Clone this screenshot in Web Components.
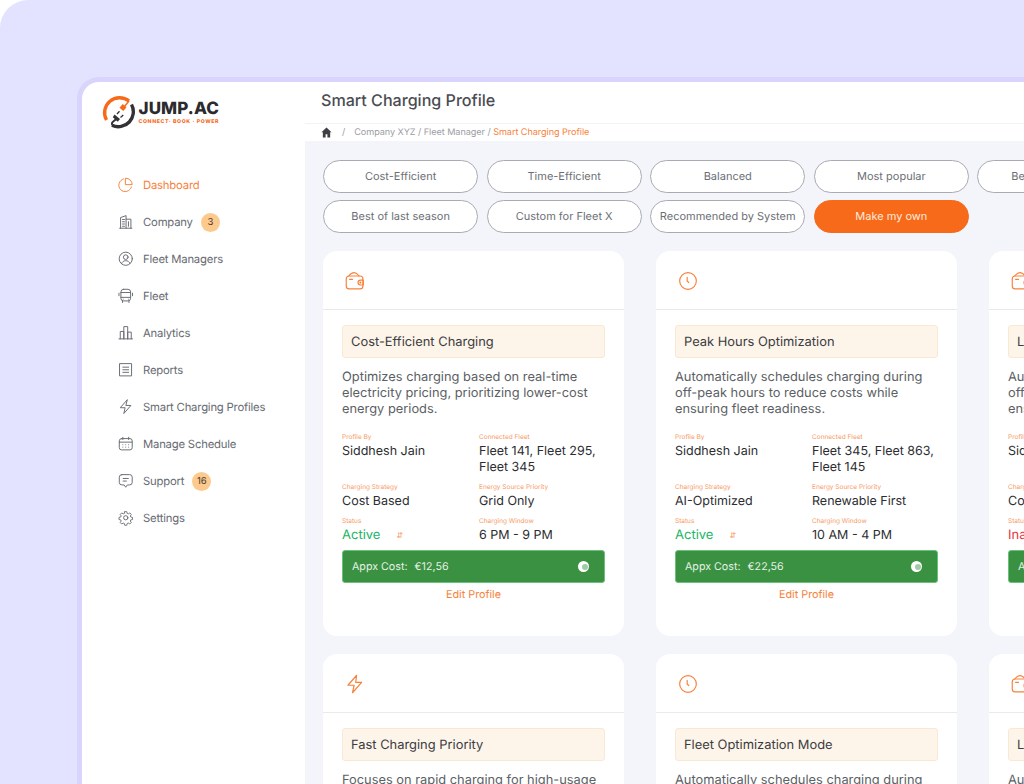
<!DOCTYPE html>
<html lang="en"><head><meta charset="utf-8"><title>Smart Charging Profile</title>
<style>
html,body{margin:0;padding:0;width:1024px;height:784px;overflow:hidden;background:#fff;font-family:"Inter","Noto Sans",sans-serif;text-rendering:geometricPrecision}
</style></head><body>
<app-shell>
  <side-nav slot="side">
    <nav-item icon="pie" active>Dashboard</nav-item>
    <nav-item icon="building" badge="3">Company</nav-item>
    <nav-item icon="user">Fleet Managers</nav-item>
    <nav-item icon="bus">Fleet</nav-item>
    <nav-item icon="bars">Analytics</nav-item>
    <nav-item icon="report">Reports</nav-item>
    <nav-item icon="zap">Smart Charging Profiles</nav-item>
    <nav-item icon="calendar">Manage Schedule</nav-item>
    <nav-item icon="chat" badge="16">Support</nav-item>
    <nav-item icon="gear">Settings</nav-item>
  </side-nav>
  <page-head slot="head"></page-head>
  <chip-row>
    <filter-chip>Cost-Efficient</filter-chip><filter-chip>Time-Efficient</filter-chip><filter-chip>Balanced</filter-chip><filter-chip>Most popular</filter-chip><filter-chip>Best for Summer</filter-chip>
    <filter-chip>Best of last season</filter-chip><filter-chip>Custom for Fleet X</filter-chip><filter-chip>Recommended by System</filter-chip><filter-chip primary>Make my own</filter-chip>
  </chip-row>
  <card-grid>
    <profile-card icon="wallet" heading="Cost-Efficient Charging" cost="€12,56">
      <span slot="desc">Optimizes charging based on real-time electricity pricing, prioritizing lower-cost energy periods.</span>
      <profile-field label="Profile By">Siddhesh Jain</profile-field>
      <profile-field label="Connected Fleet">Fleet 141, Fleet 295, Fleet 345</profile-field>
      <profile-field label="Charging Strategy">Cost Based</profile-field>
      <profile-field label="Energy Source Priority">Grid Only</profile-field>
      <profile-field label="Status" status="active">Active</profile-field>
      <profile-field label="Charging Window">6 PM - 9 PM</profile-field>
    </profile-card>
    <profile-card icon="clock" heading="Peak Hours Optimization" cost="€22,56">
      <span slot="desc">Automatically schedules charging during off-peak hours to reduce costs while ensuring fleet readiness.</span>
      <profile-field label="Profile By">Siddhesh Jain</profile-field>
      <profile-field label="Connected Fleet">Fleet 345, Fleet 863, Fleet 145</profile-field>
      <profile-field label="Charging Strategy">AI-Optimized</profile-field>
      <profile-field label="Energy Source Priority">Renewable First</profile-field>
      <profile-field label="Status" status="active">Active</profile-field>
      <profile-field label="Charging Window">10 AM - 4 PM</profile-field>
    </profile-card>
    <profile-card icon="wallet" heading="Least-Cost Window" cost="€18,20">
      <span slot="desc">Automatically schedules charging during off-peak hours to reduce costs while ensuring fleet readiness.</span>
      <profile-field label="Profile By">Siddhesh Jain</profile-field>
      <profile-field label="Connected Fleet">Fleet 210, Fleet 412, Fleet 518</profile-field>
      <profile-field label="Charging Strategy">Cost Based</profile-field>
      <profile-field label="Energy Source Priority">Grid Only</profile-field>
      <profile-field label="Status" status="inactive">Inactive</profile-field>
      <profile-field label="Charging Window">6 PM - 9 PM</profile-field>
    </profile-card>
    <profile-card icon="zap" heading="Fast Charging Priority" cost="€16,40">
      <span slot="desc">Focuses on rapid charging for high-usage vehicles to keep downtime to a minimum.</span>
    </profile-card>
    <profile-card icon="clock" heading="Fleet Optimization Mode" cost="€20,10">
      <span slot="desc">Automatically schedules charging during off-peak hours to reduce costs.</span>
    </profile-card>
    <profile-card icon="wallet" heading="Least-Cost Window" cost="€14,75">
      <span slot="desc">Automatically balances charging across the fleet.</span>
    </profile-card>
  </card-grid>
</app-shell>
<script>
const ICONS={
 pie:'<path d="M20.800 15.500A10 10 0 1 1 8.500 3"/><path d="M12 1.800a10 10 0 0 1 10 10H12z"/>',
 building:'<path d="M2.500 22h19"/><path d="M4 22V5.500l8.500-3V22"/><path d="M12.500 8h7.500v14"/><path d="M7 8.500h3M7 12h3M7 15.500h3M7 19h3"/><path d="M16.200 12v7"/>',
 user:'<circle cx="12" cy="12" r="10.200"/><circle cx="12" cy="9.500" r="3.600"/><path d="M5.500 19.500c1-3 3.500-4.500 6.500-4.500s5.500 1.500 6.500 4.500"/>',
 bus:'<rect x="4.500" y="2" width="15" height="18" rx="4"/><path d="M4.500 7h15M4.500 14.500h15"/><path d="M1.500 8v4M22.500 8v4"/><path d="M7 20v2.500M17 20v2.500"/><path d="M8 17.300h.01M16 17.300h.01"/>',
 bars:'<path d="M1.500 21.500h21"/><path d="M3.500 21.500V10h5.500v11.500"/><path d="M9 21.500V2.500h6v19"/><path d="M15 21.500V11h5.500v10.500"/>',
 report:'<path d="M3 2.500h18v19H3z"/><path d="M7.500 8h9M7.500 12h9M7.500 16h9"/>',
 zap:'<path d="M14 1.500 3.500 13.500h7.500L9 22.500l11-12.500h-7.200z"/>',
 calendar:'<rect x="2" y="4" width="20" height="17.500" rx="3.500"/><path d="M2 9.500h20M7.500 2v3.500M16.500 2v3.500"/><path d="M7.500 13.500h.01M12 13.500h.01M16.500 13.500h.01M7.500 17.300h.01M12 17.300h.01M16.500 17.300h.01"/>',
 chat:'<path d="M6 2.500h12a4 4 0 0 1 4 4v8a4 4 0 0 1-4 4h-3.500L12 22l-2.500-3.500H6a4 4 0 0 1-4-4v-8a4 4 0 0 1 4-4z"/><path d="M8 8.500h8M8 12.500h5"/>',
 gear:'<circle cx="12" cy="12" r="3.300"/><path d="M10.200 1.800h3.600l.6 2.900 1.900.8 2.500-1.600 2.500 2.500-1.600 2.500.8 1.900 2.900.6v3.600l-2.900.6-.8 1.900 1.600 2.500-2.500 2.500-2.500-1.600-1.900.8-.6 2.900h-3.600l-.6-2.900-1.900-.8-2.500 1.600-2.500-2.500 1.600-2.500-.8-1.900-2.900-.6v-3.600l2.900-.6.8-1.900-1.600-2.500 2.500-2.500 2.500 1.600 1.900-.8z" transform="translate(12 12) scale(.92) translate(-12 -12)"/>',
 wallet:'<rect x="1.500" y="6" width="20" height="15.500" rx="3.500"/><path d="M4.500 6c1.500-2 4.500-4 6.500-4s4.500 2 6 4"/><path d="M5.500 10h3.500"/><path d="M22 11h-3.500a2.900 2.900 0 0 0 0 5.800H22z"/><circle cx="18.500" cy="13.900" r=".6"/>',
 clock:'<circle cx="12" cy="12" r="10"/><path d="M11 7.500v4.500l2 2"/>'
};
const svg=(n,s,w=1.6)=>`<svg width="${s}" height="${s}" viewBox="0 0 24 24" fill="none" stroke="currentColor" stroke-width="${w}" stroke-linecap="round" stroke-linejoin="round" aria-hidden="true">${ICONS[n]}</svg>`;
function def(name,css,html){
  customElements.define(name,class extends HTMLElement{
    connectedCallback(){
      if(this.shadowRoot)return;
      const r=this.attachShadow({mode:'open'});
      r.innerHTML=`<style>${css}</style>`+(typeof html==='function'?html(this):html);
    }
  });
}
const FONT='"Inter","Noto Sans",sans-serif';
def('app-shell',`
 :host{display:block;width:1024px;height:784px;box-sizing:border-box;background:#e3e3ff;border-top-left-radius:28px;padding:77px 0 0 77px;overflow:hidden;font-family:${FONT}}
 .win{width:1100px;height:900px;box-sizing:border-box;border:5px solid #d9d4fb;border-right:0;border-bottom:0;border-top-left-radius:22px;background:#fff;display:grid;grid-template-columns:223px 1fr;grid-template-rows:auto 1fr;overflow:hidden}
 aside{grid-row:1/3}
 main{background:#f3f5fb;padding:19px 0 0 18px;min-width:0}
`,`<div class="win"><aside><slot name="side"></slot></aside><slot name="head"></slot><main><slot></slot></main></div>`);
def('side-nav',`
 :host{display:block;padding:14px 0 0 36px}
 .logo{display:flex;align-items:center;gap:3px;margin-left:-16.500px;height:32px;margin-bottom:38.500px}
 .t{display:flex;flex-direction:column;padding-top:1px}
 b{font:800 17px/20px Inter,sans-serif;color:#2b2b2e;letter-spacing:.1px}
 i{font:800 5.200px/7px Inter,sans-serif;font-style:normal;color:#f76a1a;letter-spacing:.62px;white-space:nowrap}
 nav{display:flex;flex-direction:column}
`,`<div class="logo">
 <svg width="34" height="34" viewBox="0 0 34 34" fill="none" stroke-linecap="butt" aria-hidden="true">
  <path d="M4.500 25A15 15 0 0 1 27 6" stroke="#f76a1a" stroke-width="3.400"/>
  <path d="M29.500 9.500A15 15 0 0 1 10 30.300" stroke="#333336" stroke-width="3.400"/>
  <path d="M27 6 22.500 11.500" stroke="#f76a1a" stroke-width="1.400"/>
  <rect x="18.500" y="10" width="5" height="5" transform="rotate(40 21 12.500)" fill="#f76a1a"/>
  <path d="M10.500 30c-2.500-3 3-4 4.500-7" stroke="#333336" stroke-width="2"/>
  <path d="M12.500 19.500l5.500 4.500-2.200 2.800-5-4.500z" fill="#333336"/>
  <path d="M15 19l2.500-2.800M18.500 22.500l2.800-2.500" stroke="#333336" stroke-width="1.300"/>
 </svg>
 <div class="t"><b>JUMP.AC</b><i>CONNECT· BOOK · POWER</i></div></div><nav><slot></slot></nav>`);
def('nav-item',`
 :host{display:flex;align-items:center;height:37px;color:#686b72;font-size:11.300px;letter-spacing:-.2px;font-family:${FONT}}
 :host([active]){color:#f7823c}
 .ic{display:flex;width:16px;margin-right:9px}
 .b{margin-left:8px;width:19px;height:19px;border-radius:50%;background:#fdc98c;color:#4a4036;font-size:9.500px;display:flex;align-items:center;justify-content:center}
`,h=>`<span class="ic">${svg(h.getAttribute('icon'),15.500,1.500)}</span><slot></slot>${h.hasAttribute('badge')?`<span class="b">${h.getAttribute('badge')}</span>`:''}`);
def('page-head',`
 :host{display:block;background:#fff;font-family:${FONT}}
 h1{margin:0;height:42px;box-sizing:border-box;padding:7px 0 0 16px;font:500 16.100px/22px Inter,sans-serif;color:#4a4c52;border-bottom:1px solid #f2f3f6}
 .c{height:17px;display:flex;align-items:center;padding-left:16px;font-size:9.100px;letter-spacing:-.05px;color:#9a9da3}
 .c svg{margin-right:10px}.s{margin-right:9px}.o{color:#f7823c;margin-left:2.500px}
`,`<h1>Smart Charging Profile</h1><div class="c"><svg width="11" height="11" viewBox="0 0 24 24" fill="#3d3f44" aria-hidden="true"><path d="M12 1 1 11.500h3V23h6v-7h4v7h6V11.500h3z"/></svg><span class="s">/</span><span>Company XYZ / Fleet Manager /</span><span class="o">Smart Charging Profile</span></div>`);
def('chip-row',`
 :host{display:grid;grid-template-columns:repeat(5,155.200px);gap:7px 8.400px}
`,`<slot></slot>`);
def('filter-chip',`
 :host{display:flex;align-items:center;justify-content:center;height:33px;box-sizing:border-box;border:1px solid #a9abb0;border-bottom-width:1.500px;border-radius:17px;background:#fff;color:#6c6f75;font-size:11px;white-space:nowrap;overflow:hidden;padding-bottom:1px;font-family:${FONT}}
 :host([primary]){background:#f76a1a;border-color:#f76a1a;color:#ffe9da}
`,`<slot></slot>`);
def('card-grid',`
 :host{display:grid;grid-template-columns:repeat(3,301px);gap:18px 32px;margin-top:18px}
`,`<slot></slot>`);
def('profile-card',`
 :host{display:block;height:385px;background:#fff;border-radius:14px;overflow:hidden;font-family:${FONT}}
 .top{height:59px;box-sizing:border-box;border-bottom:1.500px solid #e9eaee;display:flex;align-items:center;padding:2px 0 0 22px;color:#f7823c}
 .bd{padding:15px 19px 0}
 h2{margin:0;height:33px;box-sizing:border-box;border:1px solid #fbe8d3;border-radius:3px;background:#fdf4ea;padding:1.500px 8px 0;display:flex;align-items:center;font:400 12.900px Inter,sans-serif;color:#3b3c40;white-space:nowrap}
 .d{margin:12px 0 14px;font-size:12.850px;line-height:16px;color:#5c5f65;height:48px}
 .g{display:grid;grid-template-columns:137px 1fr;gap:6px 0}
 .cost{margin-top:6px;height:33px;box-sizing:border-box;border:1px solid #68c07a;border-radius:3px;background:#3a9142;color:#e5f2e6;display:flex;align-items:center;padding:0 15px 0 9px;font-size:10.700px}
 .cost span{margin-left:7px;flex:1}
 .coin{width:11px;height:11px;border-radius:50%;background:#fff;display:flex;align-items:center;justify-content:center}
 .coin::after{content:"";width:6px;height:6px;border-radius:50%;background:#9fcca6;margin-left:3px}
 a{display:block;text-align:center;margin-top:5px;color:#f7823c;font-size:10.800px;line-height:14px}
`,h=>`<div class="top">${svg(h.getAttribute('icon'),20,1.400)}</div><div class="bd"><h2>${h.getAttribute('heading')}</h2><div class="d"><slot name="desc"></slot></div><div class="g"><slot></slot></div><div class="cost">Appx Cost:<span>${h.getAttribute('cost')}</span><i class="coin"></i></div><a>Edit Profile</a></div>`);
def('profile-field',`
 :host{display:block;font-family:${FONT}}
 .l{font-size:6.500px;line-height:10px;color:#f79a66;white-space:nowrap}
 .v{display:flex;align-items:flex-start;font-size:12.500px;line-height:16px;color:#2b2d31;padding-top:2px}
 :host([status=active]) .v{color:#22b565;font-size:13px;padding-top:1px;padding-bottom:1px}
 :host([status=inactive]) .v{color:#e8323c;font-size:13px;padding-top:1px;padding-bottom:1px}
 .a{color:#f79a66;font-size:8px;margin-left:16px}
`,h=>`<div class="l">${h.getAttribute('label')}</div><div class="v"><span><slot></slot></span>${h.getAttribute('status')==='active'?'<span class="a">⇵</span>':''}</div>`);
</script>
</body></html>
